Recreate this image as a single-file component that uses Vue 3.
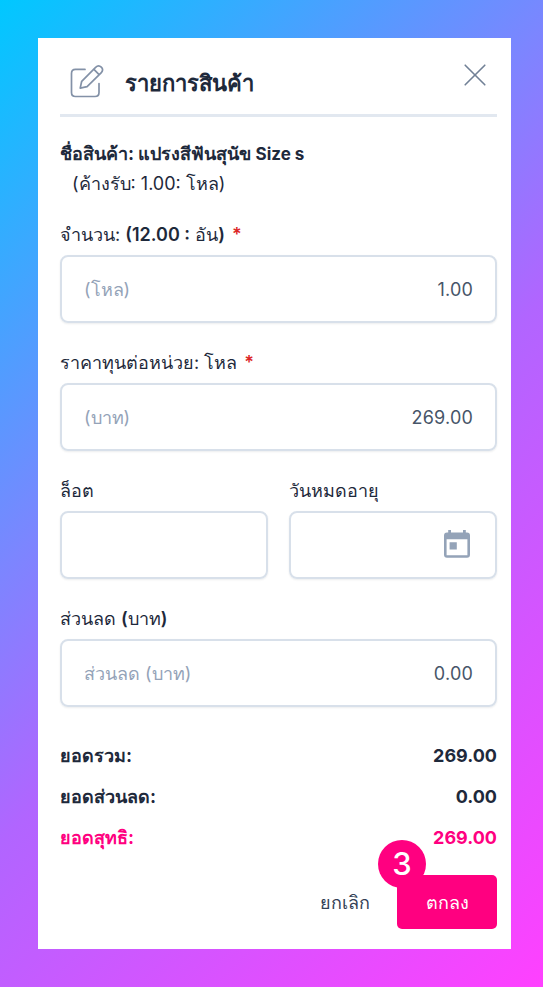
<script setup>
const totals = [
  { label: 'ยอดรวม:', value: '269.00', cls: 't-sum' },
  { label: 'ยอดส่วนลด:', value: '0.00', cls: 't-discount' },
  { label: 'ยอดสุทธิ:', value: '269.00', cls: 't-net' },
]
</script>

<template>
  <main class="page">
    <section class="card">
      <header class="head">
        <svg class="edit" viewBox="0 0 34 34" fill="none" stroke="#8391a7" stroke-width="1.7" stroke-linecap="round" stroke-linejoin="round">
          <path d="M15 5.4H5.5Q1.5 5.4 1.5 9.4V28.5Q1.5 32.5 5.5 32.5H25Q29 32.5 29 28.5V19.5" />
          <path d="M10.2 24.1L11.7 17.3L25.6 3.4Q28.5 .5 31.3 3.2Q34 5.9 31.1 8.8L17.1 22.6ZM23.7 5.2L29.1 10.7" />
        </svg>
        <h1>รายการสินค้า</h1>
        <svg class="close" viewBox="0 0 22 22" fill="none" stroke="#718096" stroke-width="1.6" stroke-linecap="round">
          <path d="M1.2 1.2L20.8 20.8M20.8 1.2L1.2 20.8" />
        </svg>
      </header>

      <div class="product">
        <strong>ชื่อสินค้า: แปรงสีฟันสุนัข <span class="size">Size s</span></strong>
        <span class="pending">(ค้างรับ: 1.00: โหล)</span>
      </div>

      <div class="field">
        <label class="l-qty">จำนวน: <b>(12.00 :</b> อัน<b>)</b> <i>*</i></label>
        <div class="box"><span class="hint">(โหล)</span><span class="val">1.00</span></div>
      </div>
      <div class="field">
        <label class="l-cost">ราคาทุนต่อหน่วย: โหล <i>*</i></label>
        <div class="box"><span class="hint">(บาท)</span><span class="val">269.00</span></div>
      </div>
      <div class="pair">
        <div class="field">
          <label class="l-lot">ล็อต</label>
          <div class="box"></div>
        </div>
        <div class="field">
          <label class="l-exp">วันหมดอายุ</label>
          <div class="box date">
            <svg class="cal" viewBox="0 0 26 28" fill="#94a3b8">
              <path fill-rule="evenodd" d="M4.2 0H7V2.6H19V0H21.8V2.6H23Q26 2.6 26 5.6V24.8Q26 27.8 23 27.8H3Q0 27.8 0 24.8V5.6Q0 2.6 3 2.6H4.2ZM2.6 9.2V25.2H23.4V9.2ZM5.6 12.2H12.8V19.4H5.6Z" />
            </svg>
          </div>
        </div>
      </div>
      <div class="field">
        <label class="l-disc">ส่วนลด <b>(</b>บาท<b>)</b></label>
        <div class="box"><span class="hint h-disc">ส่วนลด (บาท)</span><span class="val">0.00</span></div>
      </div>

      <dl class="totals">
        <div v-for="t in totals" :key="t.label" :class="t.cls">
          <dt>{{ t.label }}</dt>
          <dd>{{ t.value }}</dd>
        </div>
      </dl>

      <footer class="actions">
        <button class="cancel">ยกเลิก</button>
        <button class="ok">ตกลง<span class="badge">3</span></button>
      </footer>
    </section>
  </main>
</template>

<style>
body { margin: 0; }
</style>

<style scoped>
* { box-sizing: border-box; }
.page {
  width: 543px; height: 987px; padding: 38px 32px 38px 38px;
  background: linear-gradient(135deg, #00c8ff 0%, #7b86ff 37%, #b165ff 55%, #ff40ff 100%);
  font-family: Inter, "Noto Sans", sans-serif; font-size: 18px; color: #1e293b;
}
.card { height: 911px; padding: 0 14px 20px 22px; background: #fff; display: flex; flex-direction: column; }
.head { height: 79px; flex: none; border-bottom: 3px solid #e2e8f0; display: flex; align-items: flex-start; }
.edit { width: 34px; height: 34px; margin: 26px 0 0 10px; }
h1 { margin: 26px 0 0 21px; flex: 1; font-size: 22px; line-height: 38px; font-weight: 700; white-space: nowrap; }
.close { width: 22px; height: 22px; margin: 26px 11px 0 0; }
.product { height: 102px; flex: none; padding-top: 22px; display: flex; flex-direction: column; white-space: nowrap; }
.product strong { line-height: 30px; font-weight: 700; }
.size { font-size: 17px; }
.pending { line-height: 30px; padding-left: 12px; }
.field { height: 128px; display: flex; flex-direction: column; flex: 1 1 0; min-width: 0; }
.card > .field, .pair { flex: none; }
label { height: 36px; line-height: 32px; white-space: nowrap; }
label b { font-weight: 600; }
label i { font-style: normal; font-weight: 600; color: #dc2626; margin-left: 2px; }
.box {
  height: 68px; border: 2px solid #d8e0ea; border-radius: 8px; padding: 0 22px;
  display: flex; align-items: center; justify-content: space-between;
  box-shadow: 0 1px 2px #0f172a14;
}
.hint { color: #94a3b8; white-space: nowrap; }
.val { color: #475569; letter-spacing: .2px; }
.pair { display: flex; gap: 21px; }
.date { justify-content: flex-end; padding-right: 25px; }
.cal { width: 26px; height: 28px; margin-top: -3px; }
.totals { margin: 4px 0 0; font-weight: 700; }
.totals > div { height: 41px; display: flex; justify-content: space-between; align-items: center; white-space: nowrap; }
dd { margin: 0; }
.t-net { color: #ff0080; }
.actions { margin-top: auto; display: flex; justify-content: flex-end; gap: 27px; }
button { border: 0; padding: 0; background: none; font: inherit; color: #334155; white-space: nowrap; }
.ok { position: relative; width: 100px; height: 54px; border-radius: 5px; background: #ff0080; color: #fff; }
.badge {
  position: absolute; left: -19px; top: -35px; width: 48px; height: 48px; border-radius: 50%;
  background: #ff0080; color: #fff; font: 500 31px/48px Inter, sans-serif; text-align: center;
}
</style>
